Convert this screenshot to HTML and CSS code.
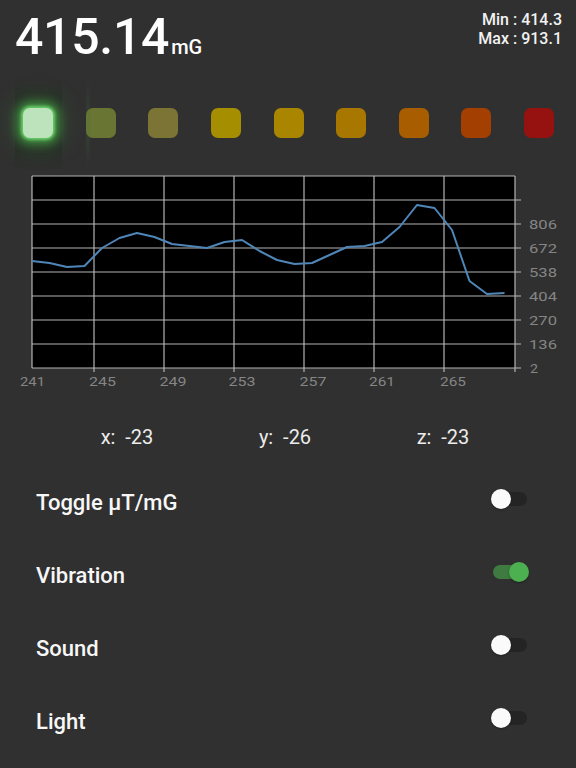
FILE: index.html
```html
<!DOCTYPE html>
<html>
<head>
<meta charset="utf-8">
<link rel="stylesheet" href="styles.css">
</head>
<body>
<div class="app">
  <header class="header">
    <div class="reading">415.14<span class="unit">mG</span></div>
    <div class="minmax">
      <div>Min : 414.3</div>
      <div>Max : 913.1</div>
    </div>
  </header>

  <div class="lights">
    <div class="light on"></div>
    <div class="light l2"></div>
    <div class="light l3"></div>
    <div class="light l4"></div>
    <div class="light l5"></div>
    <div class="light l6"></div>
    <div class="light l7"></div>
    <div class="light l8"></div>
    <div class="light l9"></div>
  </div>

  <svg class="chart" width="576" height="230" viewBox="0 165 576 230" xmlns="http://www.w3.org/2000/svg">
    <rect x="32" y="176" width="483" height="192" fill="#000"/>
    <g stroke="#b4b4b4" stroke-width="1.2" fill="none">
      <line x1="32" y1="176" x2="515" y2="176"/>
      <line x1="32" y1="200" x2="521" y2="200"/>
      <line x1="32" y1="224" x2="521" y2="224"/>
      <line x1="32" y1="248" x2="521" y2="248"/>
      <line x1="32" y1="272" x2="521" y2="272"/>
      <line x1="32" y1="296" x2="521" y2="296"/>
      <line x1="32" y1="320" x2="521" y2="320"/>
      <line x1="32" y1="344" x2="521" y2="344"/>
      <line x1="32" y1="368" x2="521" y2="368"/>
      <line x1="32" y1="176" x2="32" y2="368"/>
      <line x1="94" y1="176" x2="94" y2="372"/>
      <line x1="164" y1="176" x2="164" y2="372"/>
      <line x1="234" y1="176" x2="234" y2="372"/>
      <line x1="304" y1="176" x2="304" y2="372"/>
      <line x1="374" y1="176" x2="374" y2="372"/>
      <line x1="444" y1="176" x2="444" y2="372"/>
      <line x1="515" y1="176" x2="515" y2="372"/>
    </g>
    <polyline fill="none" stroke="#4f86b8" stroke-width="2" stroke-linejoin="round"
      points="32,261 49.5,263 67,267 84.5,266 102,248 119.5,238 137,233 154.5,237 172,244 189.5,246 207,248 224.5,242 242,240 259.5,251 277,260 294.5,264 312,263 329.5,255 347,247 364.5,246 382,242 399.5,227 417,205 434.5,208 452,230 469.5,281 487,294 504.5,293"/>
    <g class="ylab">
      <text x="529" y="228.5" textLength="28" lengthAdjust="spacingAndGlyphs">806</text>
      <text x="529" y="252.5" textLength="28" lengthAdjust="spacingAndGlyphs">672</text>
      <text x="529" y="276.5" textLength="28" lengthAdjust="spacingAndGlyphs">538</text>
      <text x="529" y="300.5" textLength="28" lengthAdjust="spacingAndGlyphs">404</text>
      <text x="529" y="324.5" textLength="28" lengthAdjust="spacingAndGlyphs">270</text>
      <text x="529" y="348.5" textLength="28" lengthAdjust="spacingAndGlyphs">136</text>
      <text x="530" y="372.5" textLength="8" lengthAdjust="spacingAndGlyphs">2</text>
    </g>
    <g class="xlab">
      <text x="20" y="386" textLength="25" lengthAdjust="spacingAndGlyphs">241</text>
      <text x="89" y="386" textLength="27" lengthAdjust="spacingAndGlyphs">245</text>
      <text x="159.5" y="386" textLength="27" lengthAdjust="spacingAndGlyphs">249</text>
      <text x="228.5" y="386" textLength="27" lengthAdjust="spacingAndGlyphs">253</text>
      <text x="299.5" y="386" textLength="27" lengthAdjust="spacingAndGlyphs">257</text>
      <text x="369" y="386" textLength="26" lengthAdjust="spacingAndGlyphs">261</text>
      <text x="440" y="386" textLength="26" lengthAdjust="spacingAndGlyphs">265</text>
    </g>
  </svg>

  <div class="axes">
    <div class="axis">x:  -23</div>
    <div class="axis">y:  -26</div>
    <div class="axis">z:  -23</div>
  </div>

  <div class="settings">
    <div class="row">
      <span class="label">Toggle μT/mG</span>
      <span class="switch"><span class="track"></span><span class="thumb"></span></span>
    </div>
    <div class="row">
      <span class="label">Vibration</span>
      <span class="switch checked"><span class="track"></span><span class="thumb"></span></span>
    </div>
    <div class="row">
      <span class="label">Sound</span>
      <span class="switch"><span class="track"></span><span class="thumb"></span></span>
    </div>
    <div class="row">
      <span class="label">Light</span>
      <span class="switch"><span class="track"></span><span class="thumb"></span></span>
    </div>
  </div>
</div>
</body>
</html>
```

FILE: styles.css
```css
html {
  margin: 0;
  padding: 0;
  background: #303030;
}

body {
  margin: 0;
  padding: 0;
  font-family: Roboto, "Liberation Sans", sans-serif;
  color: #f4f4f4;
  width: 576px;
  height: 768px;
  overflow: hidden;
}

.header {
  display: flex;
  justify-content: space-between;
  align-items: flex-start;
  height: 80px;
  padding: 0 14px 0 15px;
}

.reading {
  margin-top: 12px;
  font-size: 50px;
  line-height: 50px;
  font-weight: 500;
  color: #ffffff;
  letter-spacing: -0.3px;
}

.unit {
  font-size: 20px;
  font-weight: 500;
  letter-spacing: 0;
  margin-left: 2px;
}

.minmax {
  margin-top: 10px;
  font-size: 16px;
  line-height: 19px;
  font-weight: 500;
  text-align: right;
  color: #f2f2f2;
}

.lights {
  display: flex;
  justify-content: space-between;
  align-items: center;
  height: 85px;
  padding: 0 22px 0 23px;
}

.light {
  width: 30px;
  height: 30px;
  border-radius: 7px;
}

.light.on {
  position: relative;
  background: #bde3bd;
  box-shadow: 0 0 3px 2px #6acd6a, 0 0 10px 6px rgba(80, 200, 80, 0.55), 0 0 22px 10px rgba(60, 160, 60, 0.28);
}

.light.on::before {
  content: "";
  position: absolute;
  left: -8px;
  right: -9px;
  top: -30px;
  bottom: -32px;
  background: linear-gradient(to bottom, rgba(38, 40, 38, 0) 0%, rgba(38, 42, 38, 0.75) 22%, rgba(38, 42, 38, 0.75) 78%, rgba(38, 40, 38, 0) 100%);
  z-index: -1;
}

.light.on::after {
  content: "";
  position: absolute;
  left: 63px;
  width: 4px;
  top: -26px;
  bottom: -28px;
  background: linear-gradient(to bottom, rgba(70, 110, 70, 0) 0%, rgba(70, 110, 70, 0.2) 40%, rgba(70, 110, 70, 0.2) 60%, rgba(70, 110, 70, 0) 100%);
}

.l2 { background: #697532; }
.l3 { background: #7b7434; }
.l4 { background: #a58e00; }
.l5 { background: #a98500; }
.l6 { background: #a77700; }
.l7 { background: #a75d00; }
.l8 { background: #a33f00; }
.l9 { background: #951210; }

.chart {
  display: block;
}

.ylab text, .xlab text {
  font-family: Roboto, "Liberation Sans", sans-serif;
  font-size: 12.5px;
  fill: #858585;
}

.axes {
  display: grid;
  grid-template-columns: repeat(3, 158px);
  padding: 30px 0 16px 48px;
  height: 24px;
}

.axis {
  text-align: center;
  white-space: pre;
  font-size: 20px;
  line-height: 24px;
  color: #ececec;
}

.settings {
  display: flex;
  flex-direction: column;
}

.row {
  display: flex;
  justify-content: space-between;
  align-items: center;
  height: 73px;
  padding: 0 47px 0 36px;
}

.label {
  font-size: 22px;
  font-weight: 500;
  color: #f7f7f7;
  padding-top: 2px;
}

.switch {
  position: relative;
  width: 38px;
  height: 20px;
  margin-bottom: 6px;
}

.track {
  position: absolute;
  left: 2px;
  top: 3px;
  width: 34px;
  height: 14px;
  border-radius: 7px;
  background: #242424;
}

.thumb {
  position: absolute;
  left: 0;
  top: 0;
  width: 20px;
  height: 20px;
  border-radius: 50%;
  background: #fafafa;
  box-shadow: 0 1px 2px rgba(0, 0, 0, 0.35);
}

.switch.checked .track {
  background: #3f7a40;
}

.switch.checked .thumb {
  left: auto;
  right: 0;
  background: #4caf50;
}
```
